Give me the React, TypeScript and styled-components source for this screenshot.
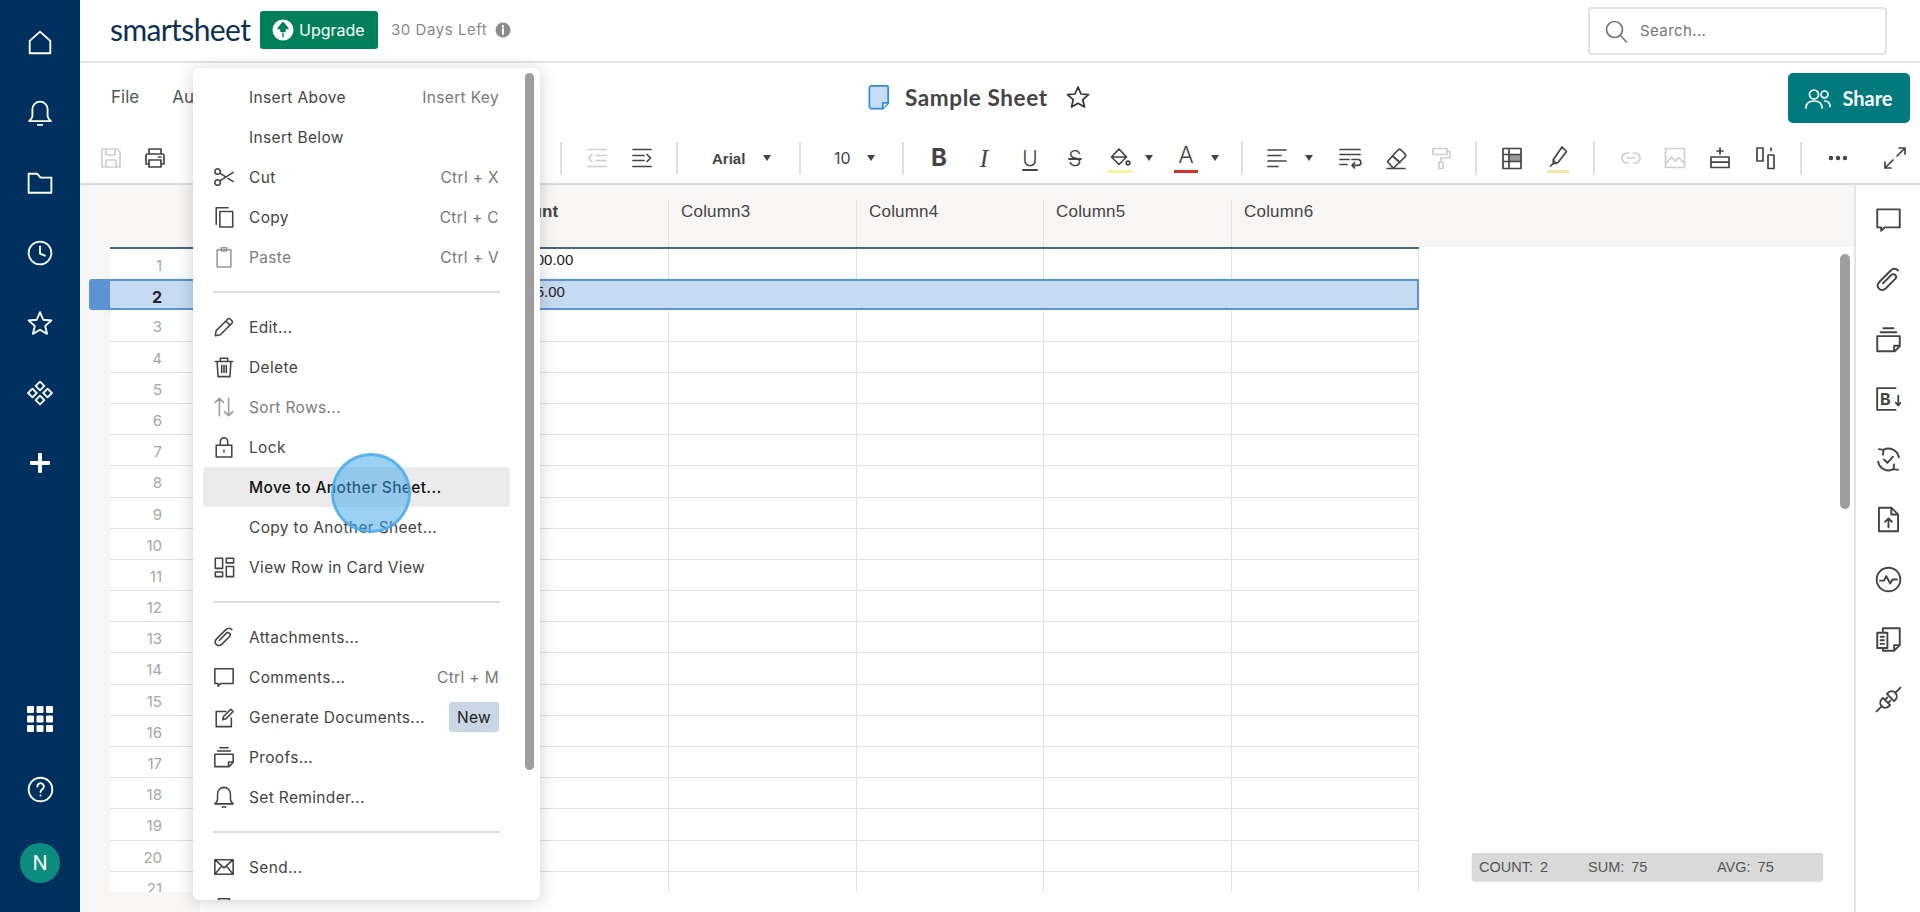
import React from "react";
import styled, { createGlobalStyle } from "styled-components";

const GlobalStyle = createGlobalStyle`
  html, body { margin: 0; padding: 0; background: #fff; }
  body { font-family: Inter, "Liberation Sans", sans-serif; color: #444; overflow: hidden; }
  * { box-sizing: border-box; }
`;

const Page = styled.div`
  position: relative;
  display: flex;
  width: 1920px;
  height: 912px;
  overflow: hidden;
`;

/* ---------- icons ---------- */

const Svg = styled.svg<{ $h?: number; $w?: number }>`
  display: block;
  width: ${(p) => p.$w || 24}px;
  height: ${(p) => p.$h || p.$w || 24}px;
  fill: none;
  stroke: currentColor;
  stroke-width: 1.7;
  stroke-linecap: round;
  stroke-linejoin: round;
  flex: none;
`;

type IconProps = { size?: number };

const makeIcon = (d: string) =>
  function Icon({ size }: IconProps) {
    return (
      <Svg viewBox="0 0 24 24" $w={size}>
        <path d={d} />
      </Svg>
    );
  };

const HomeIcon = makeIcon("M2.5 21.5V10L12 1.5 21.5 10v11.5z");
const BellIcon = makeIcon("M12 1.5a7 7 0 0 0-7 7v6c0 2-1.5 3.5-3 5h20c-1.5-1.5-3-3-3-5v-6a7 7 0 0 0-7-7z M10 23h4");
const FolderIcon = makeIcon("M1.5 3.5h8l3 3.5h10v14h-21z");
const ClockIcon = makeIcon("M12 1.5a10.5 10.5 0 1 0 0 21 10.5 10.5 0 0 0 0-21z M12 6v6.5l4.5 2");
const StarIcon = makeIcon("M12 2l3 7 7.5.7-5.7 5 1.7 7.3L12 18.2 5.5 22l1.7-7.3-5.7-5L9 9z");
const HubIcon = makeIcon("M12 1.5l4 4-4 4-4-4z M5 8l4 4-4 4-4-4z M19 8l4 4-4 4-4-4z M12 14.5l4 4-4 4-4-4z");
const HelpIcon = makeIcon(
  "M12 1.5a10.5 10.5 0 1 0 0 21 10.5 10.5 0 0 0 0-21z M9.2 9.3a2.9 2.9 0 1 1 4.5 2.4c-1.1.8-1.7 1.3-1.7 2.5 M12 17.2v.2"
);
const SearchIcon = makeIcon("M10.5 2.5a8 8 0 1 0 0 16 8 8 0 0 0 0-16z M16.5 16.5l6 6.5");
const SaveIcon = makeIcon("M3 3h15l3 3v15H3z M7 3v6h9V3 M7 21v-7h10v7");
const PrintIcon = makeIcon("M6 8V3h12v5 M6 18H3V9.5A1.5 1.5 0 0 1 4.5 8h15A1.5 1.5 0 0 1 21 9.5V18h-3 M6 14h12v7H6z M15.5 11h2.5");
const OutdentIcon = makeIcon("M3 3.5h18 M3 20.5h18 M11 9.5h10 M11 14.5h10 M7 8.5L3.5 12 7 15.5");
const IndentIcon = makeIcon("M3 3.5h18 M3 20.5h18 M3 9.5h11 M3 14.5h11 M17 8.5l3.5 3.5-3.5 3.5");
const AlignIcon = makeIcon("M3 4h18 M3 9.5h13 M3 15h18 M3 20.5h10");
const WrapIcon = makeIcon("M2 3.5h20 M2 8.5h20 M2 13.5h9 M2 18.5h7 M14 13.5h6a2.8 2.8 0 0 1 0 5.8h-6 M16.5 16.8L14 19.3l2.5 2.5");
const EraserIcon = makeIcon("M3.5 15.5L14 4a2 2 0 0 1 3 0l4 4a2 2 0 0 1 0 3L10 21.5H8.5z M8.5 10l7.5 6.5 M3 22.5h18");
const RollerIcon = makeIcon("M4 2.5h14v6H4z M18 5.5h3V12h-9v4 M10 16h4v6.5h-4z");
const LinkIcon = makeIcon("M9.5 7H8a5 5 0 0 0 0 10h1.5 M14.5 7H16a5 5 0 0 1 0 10h-1.5 M8 12h8");
const ImageIcon = makeIcon("M2.5 2.5h19v19h-19z M2.5 18l6-7 4 4 3-3.5 6 6");
const RowPlusIcon = makeIcon("M12 2v6 M9 5h6 M3 11h18v10.5H3z M3 16.2h18");
const ColumnsIcon = makeIcon("M4 2h6v13H4z M15 9h6v13.5h-6z M18 2v2.5");
const ExpandIcon = makeIcon("M14 10l8-8 M16 2h6v6 M10 14l-8 8 M2 16v6h6");
const CommentIcon = makeIcon("M2 3h20v16H8.5L5.5 22v-3H2z");
const ClipIcon = makeIcon("M20.5 4c-2-2-4.5-2-6.5 0L4 14c-2 2-2 4.5-.5 6.2s4.2 1.5 6-.2l8.5-8.5c1-1 1-2.5 0-3.5s-2.5-1-3.5 0L7 15.5");
const ProofsIcon = makeIcon("M7.5 2h9 M5 5.5h14 M2 9h20v9l-4.5 4.5H2z M22 17.5h-5v5");
const SyncIcon = makeIcon("M7.5 3.4A9.5 9.5 0 0 1 21.2 10 M16.5 20.6A9.5 9.5 0 0 1 2.8 14 M3.5 2.8l4 .6-.4 4.2 M20.5 21.2l-4-.6.4-4.2 M8 12l3 3 5-5.5");
const FileUpIcon = makeIcon("M3.5 1.5h11l6 6v15h-17z M14.5 1.5v6h6 M12 19v-8 M9 14l3-3 3 3");
const PulseIcon = makeIcon("M12 1.5a10.5 10.5 0 1 0 0 21 10.5 10.5 0 0 0 0-21z M4.5 13H8l2-4 3.5 6.5 2-3.5h4");
const DocsIcon = makeIcon("M7 6V2h15v15l-5 5H7v-2.5 M22 17h-5v5 M2 6h9v13.5H2z M5 9.5h3 M5 12.7h3 M5 15.9h3");
const ScissorsIcon = makeIcon("M5 3a3 3 0 1 0 0 6 3 3 0 0 0 0-6z M5 15a3 3 0 1 0 0 6 3 3 0 0 0 0-6z M7.5 7.7L22 17 M7.5 16.3L22 7");
const CopyIcon = makeIcon("M3.5 20V2h13 M7.5 6h14v17h-14z");
const PasteIcon = makeIcon("M4.5 4h15v19h-15z M9 2h6v3.5H9z");
const PencilIcon = makeIcon("M2.5 21.5l1-5.5L16 3.5a2 2 0 0 1 3 0l1.5 1.5a2 2 0 0 1 0 3L8 20.5z M14 5.5l4.5 4.5");
const TrashIcon = makeIcon("M2.5 6h19 M8 6V2.5h8V6 M4.5 6l1 16.5h13l1-16.5 M9.5 10v8 M12 10v8 M14.5 10v8");
const SortIcon = makeIcon("M7 21.5v-19 M2.5 7L7 2.5 11.5 7 M17 2.5v19 M12.5 17l4.5 4.5 4.5-4.5");
const LockIcon = makeIcon("M3.5 10h17v13h-17z M8 10V6a4 4 0 0 1 8 0v4 M12 15.5v2");
const CardIcon = makeIcon("M2.5 2.5h8v11h-8z M14.5 2.5h8v5h-8z M2.5 17.5h8v5h-8z M14.5 11.5h8v11h-8z");
const GenerateIcon = makeIcon("M20 13v9.5H3.5V6H14 M10.5 15l1-3.5 8-8 2.5 2.5-8 8z");
const MailIcon = makeIcon("M2 4h20v16H2z M2 4l10 9 10-9 M2 20l7.5-9 M22 20l-7.5-9");

const PlugIcon = ({ size }: IconProps) => (
  <Svg viewBox="0 0 24 24" $w={size}>
    <g transform="rotate(-45 12 12)">
      <path d="M-3 12h6 M9.5 7.5H8a4.5 4.5 0 0 0 0 9h1.5z M9.5 10h3 M9.5 14h3 M14.5 7.5H16a4.5 4.5 0 0 1 0 9h-1.5z M21 12h6" />
    </g>
  </Svg>
);

const UpgradeGlyph = () => (
  <Svg viewBox="0 0 24 24" $w={24}>
    <circle cx="12" cy="12" r="10.5" fill="#fff" stroke="none" />
    <path d="M12 4.5l5 6h-3v3h-4v-3H7z M12 15.5v3" fill="#00805a" stroke="#00805a" strokeWidth="1.5" />
  </Svg>
);

const InfoGlyph = () => (
  <Svg viewBox="0 0 16 16" $w={16}>
    <circle cx="8" cy="8" r="7.5" fill="#8c8c8c" stroke="none" />
    <path d="M8 7v5 M8 4v.8" stroke="#fff" strokeWidth="2" />
  </Svg>
);

const SheetGlyph = () => (
  <Svg viewBox="0 0 22 26" $w={22} $h={25}>
    <path d="M3 1h16.5a1 1 0 0 1 1 1v17l-5.5 5.5H3a2 2 0 0 1-2-2V3a2 2 0 0 1 2-2z" fill="#c9ddf6" stroke="#2a90d4" strokeWidth="1.8" />
    <path d="M20.5 18.5H15v6" fill="#fff" stroke="#2a90d4" strokeWidth="1.8" />
  </Svg>
);

const AppsGlyph = () => (
  <Svg viewBox="0 0 26 26" $w={26}>
    {[0, 9.5, 19].map((x) =>
      [0, 9.5, 19].map((y) => <rect key={`${x}-${y}`} x={x} y={y} width="7" height="7" rx="1.2" fill="#fff" stroke="none" />)
    )}
  </Svg>
);

const PeopleGlyph = () => (
  <Svg viewBox="0 0 26 24" $w={26}>
    <path d="M9 4a4.5 4.5 0 1 0 0 9 4.5 4.5 0 0 0 0-9z M1 22c0-5 3.5-7 8-7s8 2 8 7 M19.5 5a3.5 3.5 0 1 0 0 7 3.5 3.5 0 0 0 0-7z M19.5 15c3.5 0 5.5 2 5.5 5.5" />
  </Svg>
);

const FillGlyph = () => (
  <Svg viewBox="0 0 24 30" $w={24} $h={30}>
    <path d="M11 6l-7.5 8 7.5 7.5 7.5-7.5z M3.5 14h15" />
    <circle cx="20" cy="20" r="1.8" />
    <rect x="0" y="27" width="24" height="3" fill="#f7f49c" stroke="none" />
  </Svg>
);

const TableGlyph = () => (
  <Svg viewBox="0 0 24 24" $w={24}>
    <rect x="9" y="8.5" width="12" height="7" fill="#999" stroke="none" />
    <path d="M3 2.5h18v20H3z M3 8.5h18 M3 15.5h18 M9 2.5v20" />
  </Svg>
);

const MarkerGlyph = () => (
  <Svg viewBox="0 0 24 30" $w={24} $h={30}>
    <path d="M16 4l4.5 4.5-8.5 11-5 1.5.8-5z M7 17l3.5 3.5 M6.5 21l-2 2" />
    <rect x="1" y="27" width="22" height="3" fill="#f7e7a6" stroke="none" />
  </Svg>
);

const DotsGlyph = () => (
  <Svg viewBox="0 0 24 24" $w={24}>
    <circle cx="5" cy="12" r="2.2" fill="currentColor" stroke="none" />
    <circle cx="12" cy="12" r="2.2" fill="currentColor" stroke="none" />
    <circle cx="19" cy="12" r="2.2" fill="currentColor" stroke="none" />
  </Svg>
);

/* ---------- left rail ---------- */

const Rail = styled.nav`
  width: 80px;
  flex: none;
  height: 100%;
  background: #00305e;
  color: #fff;
  display: flex;
  flex-direction: column;
  justify-content: space-between;
  padding: 8px 0 29px;
`;

const RailGroup = styled.div`
  display: flex;
  flex-direction: column;
  align-items: center;
`;

const RailButton = styled.div`
  height: 70px;
  width: 100%;
  display: flex;
  align-items: center;
  justify-content: center;
`;

const PlusMark = styled.span`
  position: relative;
  display: block;
  width: 20px;
  height: 20px;
  &::before, &::after {
    content: "";
    position: absolute;
    background: #fff;
    border-radius: 1px;
  }
  &::before { left: 0; right: 0; top: 8px; height: 4px; }
  &::after { top: 0; bottom: 0; left: 8px; width: 4px; }
`;

const Avatar = styled.div`
  width: 40px;
  height: 40px;
  margin-top: 19px;
  border-radius: 50%;
  background: #0b8c7c;
  color: #fff;
  font-size: 20px;
  display: flex;
  align-items: center;
  justify-content: center;
`;

/* ---------- top bar ---------- */

const Main = styled.div`
  flex: 1;
  min-width: 0;
  display: flex;
  flex-direction: column;
`;

const TopBar = styled.header`
  height: 63px;
  flex: none;
  display: flex;
  align-items: center;
  padding: 0 33px 2px 30px;
  border-bottom: 2px solid #e4e4e4;
`;

const Logo = styled.div`
  font-family: Lato, sans-serif;
  font-size: 30px;
  letter-spacing: -0.6px;
  color: #0c2f55;
  line-height: 1;
  width: 150px;
  margin-top: -1px;
`;

const UpgradeButton = styled.button`
  width: 118px;
  height: 38px;
  border: 0;
  border-radius: 3px;
  background: #00805a;
  color: #fff;
  font: 400 16px Inter, sans-serif;
  display: flex;
  align-items: center;
  gap: 4px;
  padding: 0 0 0 11px;
`;

const Trial = styled.span`
  margin-left: 13px;
  font-size: 15px;
  letter-spacing: 0.55px;
  color: #8a8a8a;
  display: flex;
  align-items: center;
  gap: 8px;
`;

const SearchBox = styled.div`
  margin-left: auto;
  width: 299px;
  height: 48px;
  margin-top: 2px;
  border: 2px solid #e2e2e2;
  border-radius: 4px;
  display: flex;
  align-items: center;
  gap: 12px;
  padding-left: 14px;
  font-size: 15px;
  letter-spacing: 0.4px;
  color: #757575;
`;

/* ---------- title row ---------- */

const TitleBar = styled.div`
  height: 72px;
  flex: none;
  display: grid;
  grid-template-columns: 788px auto 1fr;
  align-items: center;
`;

const MenuBar = styled.div`
  display: flex;
  gap: 33px;
  padding: 0 0 5px 31px;
  font-size: 17px;
  color: #555;
`;

const TitleGroup = styled.div`
  display: flex;
  align-items: center;
  gap: 15px;
  padding-bottom: 4px;
`;

const SheetName = styled.h1`
  margin: 0;
  font: 700 22.5px Lato, sans-serif;
  letter-spacing: 0.6px;
  color: #444;
`;

const FavoriteMark = styled.span`
  margin-left: 3px;
  color: #333;
`;

const ShareButton = styled.button`
  justify-self: end;
  width: 122px;
  height: 50px;
  margin-right: 10px;
  margin-bottom: 2px;
  border: 0;
  border-radius: 5px;
  background: #007a7c;
  color: #fff;
  font: 700 20px Lato, sans-serif;
  display: flex;
  align-items: center;
  justify-content: center;
  gap: 11px;
`;

/* ---------- toolbar ---------- */

const Toolbar = styled.div`
  height: 50px;
  flex: none;
  display: flex;
  align-items: center;
  padding: 0 0 2px 0;
  border-bottom: 2px solid #dcdcdc;
  color: #444;
`;

const Tool = styled.div<{ $ml: number; $off?: boolean }>`
  margin-left: ${(p) => p.$ml}px;
  width: 24px;
  height: 30px;
  flex: none;
  display: flex;
  align-items: center;
  justify-content: center;
  color: ${(p) => (p.$off ? "#cfcfcf" : "#444")};
`;

const Divider = styled.span<{ $ml: number }>`
  margin-left: ${(p) => p.$ml}px;
  width: 2px;
  height: 33px;
  flex: none;
  background: #e0e0e0;
`;

const Caret = styled.span<{ $ml: number }>`
  margin-left: ${(p) => p.$ml}px;
  width: 12px;
  flex: none;
  display: flex;
  justify-content: center;
  &::after {
    content: "";
    border-left: 4.5px solid transparent;
    border-right: 4.5px solid transparent;
    border-top: 6px solid #444;
  }
`;

const SelectLabel = styled.span<{ $ml: number; $w: number; $plain?: boolean }>`
  margin-left: ${(p) => p.$ml}px;
  width: ${(p) => p.$w}px;
  flex: none;
  font: ${(p) => (p.$plain ? '400 16px Inter, sans-serif' : '700 15px "Liberation Sans", sans-serif')};
  color: #444;
`;

const Letter = styled.span<{ $kind: "b" | "i" | "u" | "s" }>`
  font-size: ${(p) => (p.$kind === "i" ? 25 : p.$kind === "b" ? 24 : 21)}px;
  line-height: 1;
  font-family: ${(p) => (p.$kind === "i" ? '"Liberation Serif", serif' : "Inter, sans-serif")};
  font-weight: ${(p) => (p.$kind === "b" ? 700 : p.$kind === "i" ? 400 : 300)};
  font-style: ${(p) => (p.$kind === "i" ? "italic" : "normal")};
  text-decoration: ${(p) => (p.$kind === "u" ? "underline" : p.$kind === "s" ? "line-through" : "none")};
  text-underline-offset: 3px;
  text-decoration-thickness: 1.5px;
`;

const ColorLetter = styled.span`
  width: 24px;
  height: 30px;
  text-align: center;
  font-size: 23px;
  font-weight: 300;
  line-height: 25px;
  border-bottom: 3px solid #d2302c;
`;

/* ---------- sheet ---------- */

const Content = styled.div`
  flex: 1;
  min-height: 0;
  display: flex;
`;

const SheetArea = styled.section`
  position: relative;
  flex: 1;
  min-width: 0;
  display: flex;
  flex-direction: column;
  background: linear-gradient(90deg, #f7f6f5 30px, #fff 30px);
  overflow: hidden;
`;

const columns = "90px 292px 177px 188px 187px 188px 187px";

const HeaderRow = styled.div`
  height: 62px;
  flex: none;
  padding: 15px 0 0 30px;
  background: #f7f6f5;
  display: grid;
  grid-template-columns: ${columns};
`;

const HeaderCell = styled.div<{ $bold?: boolean; $pad?: number }>`
  padding: 2px 0 0 ${(p) => p.$pad ?? 12}px;
  font: ${(p) => (p.$bold ? 700 : 400)} 17px "Liberation Sans", sans-serif;
  letter-spacing: 0.2px;
  color: #444;
  border-right: 1px solid #e4e4e4;
  &:last-child { border-right: 0; }
`;

const GridBody = styled.div`
  height: 645px;
  flex: none;
  width: 1309px;
  margin-left: 30px;
  border-top: 2px solid #4a6491;
  clip-path: inset(0 0 0 -30px);
  background: #fff;
`;

const Row = styled.div<{ $selected: boolean }>`
  position: relative;
  height: 31.2px;
  display: grid;
  grid-template-columns: ${columns};
  background: ${(p) => (p.$selected ? "#c6daf1" : "#fff")};
  border-bottom: ${(p) => (p.$selected ? "2px solid #5b93d3" : "1px solid #e2e2e2")};
  border-top: ${(p) => (p.$selected ? "2px solid #5b93d3" : "0")};
  border-right: ${(p) => (p.$selected ? "2px solid #5b93d3" : "0")};
  ${(p) => p.$selected && "box-shadow: 0 2px 8px rgba(91, 147, 211, 0.25);"}
  ${(p) => p.$selected && "margin-top: -1px;"}
`;

const RowTab = styled.span`
  position: absolute;
  left: -21px;
  top: -2px;
  bottom: -2px;
  width: 21px;
  background: #5b93d3;
  border-radius: 3px 0 0 3px;
`;

const RowNumber = styled.div<{ $selected: boolean }>`
  padding-right: 38px;
  text-align: right;
  font-size: ${(p) => (p.$selected ? 16 : 15)}px;
  line-height: 33px;
  font-weight: ${(p) => (p.$selected ? 700 : 400)};
  color: ${(p) => (p.$selected ? "#1d2433" : "#a6a6a6")};
`;

const Cell = styled.div<{ $selected: boolean; $pad?: number }>`
  padding-left: ${(p) => p.$pad ?? 12}px;
  font: 15px/22px "Liberation Sans", sans-serif;
  color: #222;
  white-space: nowrap;
  overflow: hidden;
  border-right: ${(p) => (p.$selected ? "0" : "1px solid #e4e4e4")};
`;

const GutterFoot = styled.div`
  flex: 1;
  width: 120px;
  background: #f7f6f5;
`;

const SheetScroll = styled.span`
  position: absolute;
  left: 1760px;
  top: 69px;
  width: 10px;
  height: 255px;
  border-radius: 5px;
  background: #9e9e9e;
`;

const SummaryBar = styled.div`
  position: absolute;
  left: 1392px;
  top: 668px;
  width: 351px;
  height: 28px;
  background: #d9d9d9;
  border-radius: 2px;
  box-shadow: 0 1px 2px rgba(0, 0, 0, 0.12);
  display: grid;
  grid-template-columns: 109px 129px 1fr;
  align-items: center;
  padding-left: 7px;
  font: 14.5px "Liberation Sans", sans-serif;
  color: #555;
`;

const SummaryItem = styled.span`
  display: flex;
  gap: 7px;
`;

const SidePanel = styled.aside`
  width: 66px;
  flex: none;
  border-left: 2px solid #e4e4e4;
  padding-top: 4px;
  display: flex;
  flex-direction: column;
  align-items: center;
  color: #444;
`;

const SideButton = styled.div`
  position: relative;
  height: 60px;
  width: 100%;
  display: flex;
  align-items: center;
  justify-content: center;
`;

const BriefBox = styled.span`
  position: relative;
  width: 26px;
  height: 26px;
  display: block;
  font: 700 16px/26px Inter, sans-serif;
  text-align: left;
  padding-left: 5px;
`;

const BriefFrame = styled.span`
  position: absolute;
  inset: 0;
`;

/* ---------- context menu ---------- */

const ContextMenu = styled.div`
  position: absolute;
  left: 193px;
  top: 68px;
  width: 347px;
  height: 832px;
  padding: 9px 30px 0 10px;
  border-radius: 6px;
  background: #fff;
  box-shadow: 0 2px 18px rgba(0, 0, 0, 0.18);
  overflow: hidden;
`;

const MenuRow = styled.div<{ $active?: boolean; $off?: boolean }>`
  height: 40px;
  width: 307px;
  flex: none;
  display: flex;
  align-items: center;
  padding-right: 11px;
  border-radius: 4px;
  font-size: 15.5px;
  letter-spacing: 0.35px;
  font-weight: ${(p) => (p.$active ? 500 : 400)};
  color: ${(p) => (p.$active ? "#111" : p.$off ? "#7c7c7c" : "#444")};
  background: ${(p) => (p.$active ? "#ebebeb" : "transparent")};
`;

const MenuIconSlot = styled.span<{ $off?: boolean }>`
  width: 46px;
  flex: none;
  padding-left: 10px;
  color: ${(p) => (p.$off ? "#9a9a9a" : "#444")};
`;

const MenuHint = styled.span`
  margin-left: auto;
  color: #777;
`;

const NewBadge = styled.span`
  margin-left: auto;
  width: 50px;
  height: 30px;
  border-radius: 3px;
  background: #c9d6e6;
  color: #222;
  display: flex;
  align-items: center;
  justify-content: center;
`;

const MenuRule = styled.hr`
  margin: 14px 0 14px 10px;
  width: 287px;
  height: 2px;
  border: 0;
  background: #e0e0e0;
`;

const MenuScroll = styled.span`
  position: absolute;
  right: 6px;
  top: 5px;
  width: 9px;
  height: 697px;
  border-radius: 5px;
  background: #9e9e9e;
`;

const ClickMark = styled.span`
  position: absolute;
  left: 331px;
  top: 453px;
  width: 80px;
  height: 80px;
  border-radius: 50%;
  background: rgba(62, 165, 235, 0.5);
  border: 3px solid rgba(74, 172, 235, 0.8);
  pointer-events: none;
`;

type MenuEntry =
  | "rule"
  | { label: string; icon?: React.ReactNode; hint?: string; off?: boolean; active?: boolean; badge?: string };

const menuEntries: MenuEntry[] = [
  { label: "Insert Above", hint: "Insert Key" },
  { label: "Insert Below" },
  { label: "Cut", icon: <ScissorsIcon size={22} />, hint: "Ctrl + X" },
  { label: "Copy", icon: <CopyIcon size={22} />, hint: "Ctrl + C" },
  { label: "Paste", icon: <PasteIcon size={22} />, hint: "Ctrl + V", off: true },
  "rule",
  { label: "Edit...", icon: <PencilIcon size={22} /> },
  { label: "Delete", icon: <TrashIcon size={22} /> },
  { label: "Sort Rows...", icon: <SortIcon size={22} />, off: true },
  { label: "Lock", icon: <LockIcon size={22} /> },
  { label: "Move to Another Sheet...", active: true },
  { label: "Copy to Another Sheet..." },
  { label: "View Row in Card View", icon: <CardIcon size={22} /> },
  "rule",
  { label: "Attachments...", icon: <ClipIcon size={22} /> },
  { label: "Comments...", icon: <CommentIcon size={22} />, hint: "Ctrl + M" },
  { label: "Generate Documents...", icon: <GenerateIcon size={22} />, badge: "New" },
  { label: "Proofs...", icon: <ProofsIcon size={22} /> },
  { label: "Set Reminder...", icon: <BellIcon size={22} /> },
  "rule",
  { label: "Send...", icon: <MailIcon size={22} /> },
  { label: "", icon: <PrintIcon size={22} /> },
];

const rowNumbers = Array.from({ length: 21 }, (_, i) => i + 1);
const amounts: Record<number, string> = { 1: "$100.00", 2: "$75.00" };
const headerNames = ["Column3", "Column4", "Column5", "Column6"];

function Sheet() {
  return (
    <SheetArea>
      <HeaderRow>
        <div />
        <HeaderCell $pad={0} />
        <HeaderCell $bold $pad={1}>Amount</HeaderCell>
        {headerNames.map((name) => (
          <HeaderCell key={name}>{name}</HeaderCell>
        ))}
      </HeaderRow>
      <GridBody>
        {rowNumbers.map((n) => {
          const selected = n === 2;
          return (
            <Row key={n} $selected={selected}>
              {selected && <RowTab />}
              <RowNumber $selected={selected}>{n}</RowNumber>
              <Cell $selected={selected} />
              <Cell $selected={selected} $pad={27}>{amounts[n]}</Cell>
              <Cell $selected={selected} />
              <Cell $selected={selected} />
              <Cell $selected={selected} />
              <Cell $selected={selected} />
            </Row>
          );
        })}
      </GridBody>
      <GutterFoot />
      <SheetScroll />
      <SummaryBar>
        <SummaryItem>COUNT: <span>2</span></SummaryItem>
        <SummaryItem>SUM: <span>75</span></SummaryItem>
        <SummaryItem>AVG: <span>75</span></SummaryItem>
      </SummaryBar>
    </SheetArea>
  );
}

function FormatTools() {
  return (
    <Toolbar>
      <Tool $ml={19} $off><SaveIcon /></Tool>
      <Tool $ml={20}><PrintIcon /></Tool>
      <Divider $ml={393} />
      <Tool $ml={23} $off><OutdentIcon /></Tool>
      <Tool $ml={21}><IndentIcon /></Tool>
      <Divider $ml={22} />
      <SelectLabel $ml={34} $w={49}>Arial</SelectLabel>
      <Caret $ml={0} />
      <Divider $ml={26} />
      <SelectLabel $ml={33} $w={31} $plain>10</SelectLabel>
      <Caret $ml={0} />
      <Divider $ml={25} />
      <Tool $ml={23}><Letter $kind="b">B</Letter></Tool>
      <Tool $ml={21}><Letter $kind="i">I</Letter></Tool>
      <Tool $ml={22}><Letter $kind="u">U</Letter></Tool>
      <Tool $ml={21}><Letter $kind="s">S</Letter></Tool>
      <Tool $ml={21}><FillGlyph /></Tool>
      <Caret $ml={11} />
      <Tool $ml={19}><ColorLetter>A</ColorLetter></Tool>
      <Caret $ml={11} />
      <Divider $ml={20} />
      <Tool $ml={22}><AlignIcon /></Tool>
      <Caret $ml={14} />
      <Tool $ml={23}><WrapIcon /></Tool>
      <Tool $ml={22}><EraserIcon /></Tool>
      <Tool $ml={21} $off><RollerIcon /></Tool>
      <Divider $ml={22} />
      <Tool $ml={23}><TableGlyph /></Tool>
      <Tool $ml={22}><MarkerGlyph /></Tool>
      <Divider $ml={23} />
      <Tool $ml={24} $off><LinkIcon /></Tool>
      <Tool $ml={20} $off><ImageIcon /></Tool>
      <Tool $ml={21}><RowPlusIcon /></Tool>
      <Tool $ml={21}><ColumnsIcon /></Tool>
      <Divider $ml={23} />
      <Tool $ml={24}><DotsGlyph /></Tool>
      <Tool $ml={33}><ExpandIcon /></Tool>
    </Toolbar>
  );
}

export default function App() {
  return (
    <Page>
      <GlobalStyle />
      <Rail>
        <RailGroup>
          <RailButton><HomeIcon size={26} /></RailButton>
          <RailButton><BellIcon size={26} /></RailButton>
          <RailButton><FolderIcon size={26} /></RailButton>
          <RailButton><ClockIcon size={26} /></RailButton>
          <RailButton><StarIcon size={26} /></RailButton>
          <RailButton><HubIcon size={26} /></RailButton>
          <RailButton><PlusMark /></RailButton>
        </RailGroup>
        <RailGroup>
          <RailButton><AppsGlyph /></RailButton>
          <RailButton><HelpIcon size={27} /></RailButton>
          <Avatar>N</Avatar>
        </RailGroup>
      </Rail>
      <Main>
        <TopBar>
          <Logo>smartsheet</Logo>
          <UpgradeButton><UpgradeGlyph />Upgrade</UpgradeButton>
          <Trial>30 Days Left <InfoGlyph /></Trial>
          <SearchBox><SearchIcon />Search...</SearchBox>
        </TopBar>
        <TitleBar>
          <MenuBar>
            <span>File</span>
            <span>Automation</span>
          </MenuBar>
          <TitleGroup>
            <SheetGlyph />
            <SheetName>Sample Sheet</SheetName>
            <FavoriteMark><StarIcon /></FavoriteMark>
          </TitleGroup>
          <ShareButton><PeopleGlyph />Share</ShareButton>
        </TitleBar>
        <FormatTools />
        <Content>
          <Sheet />
          <SidePanel>
            <SideButton><CommentIcon size={27} /></SideButton>
            <SideButton><ClipIcon size={27} /></SideButton>
            <SideButton><ProofsIcon size={27} /></SideButton>
            <SideButton>
              <BriefBox>
                <BriefFrame>
                  <Svg viewBox="0 0 24 24" $w={26}>
                    <path d="M19 2H2v20h17 M21.5 9v9 M19.3 15.5l2.2 2.5 2.2-2.5" />
                  </Svg>
                </BriefFrame>
                B
              </BriefBox>
            </SideButton>
            <SideButton><SyncIcon size={27} /></SideButton>
            <SideButton><FileUpIcon size={27} /></SideButton>
            <SideButton><PulseIcon size={27} /></SideButton>
            <SideButton><DocsIcon size={27} /></SideButton>
            <SideButton><PlugIcon size={27} /></SideButton>
          </SidePanel>
        </Content>
      </Main>
      <ContextMenu>
        {menuEntries.map((entry, i) =>
          entry === "rule" ? (
            <MenuRule key={i} />
          ) : (
            <MenuRow key={entry.label || i} $active={entry.active} $off={entry.off}>
              <MenuIconSlot $off={entry.off}>{entry.icon}</MenuIconSlot>
              {entry.label}
              {entry.hint && <MenuHint>{entry.hint}</MenuHint>}
              {entry.badge && <NewBadge>{entry.badge}</NewBadge>}
            </MenuRow>
          )
        )}
        <MenuScroll />
      </ContextMenu>
      <ClickMark />
    </Page>
  );
}
